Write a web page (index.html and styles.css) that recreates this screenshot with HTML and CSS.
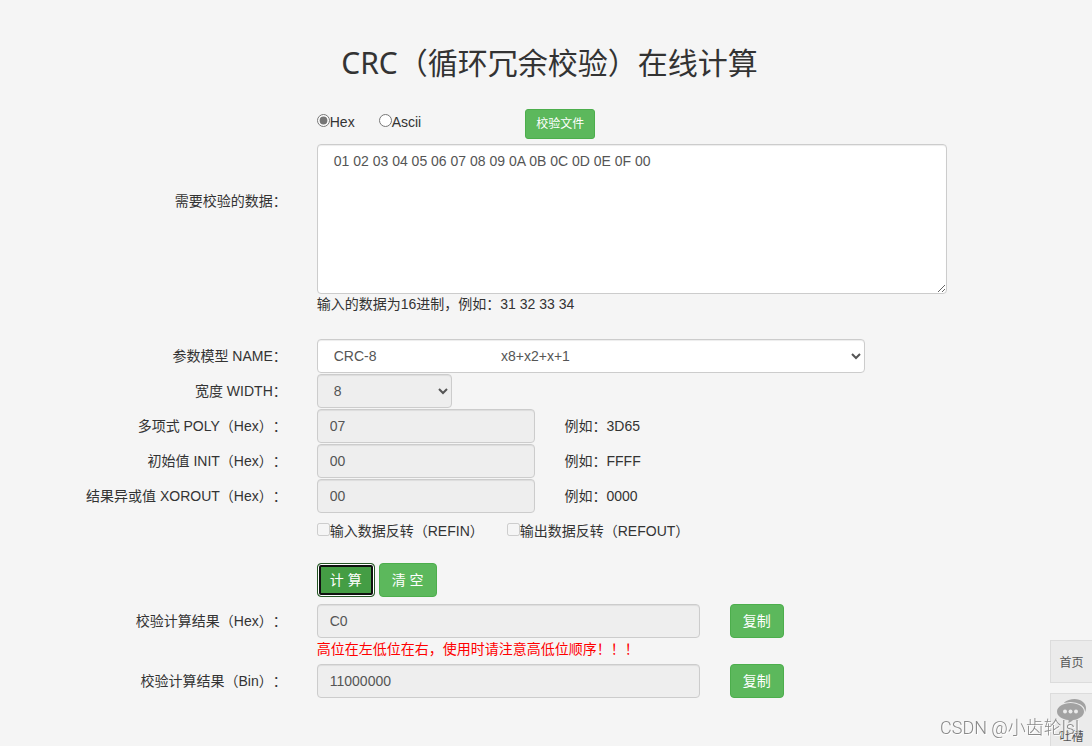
FILE: index.html
```html
<!DOCTYPE html>
<html lang="zh-CN">
<head>
<meta charset="utf-8">
<title>CRC（循环冗余校验）在线计算</title>
<link rel="stylesheet" href="styles.css">
</head>
<body>
<main class="page">
  <h1 class="title">CRC（循环冗余校验）在线计算</h1>
  <form class="form">
    <div class="row">
      <div class="c9 modes">
        <label class="check"><input type="radio" name="mode" checked>Hex</label>
        <label class="check"><input type="radio" name="mode">Ascii</label>
        <button type="button" class="btn btn-sm">校验文件</button>
      </div>
    </div>
    <div class="row">
      <label class="label label-data" for="data">需要校验的数据：</label>
      <div class="c8">
        <textarea id="data" class="control area" spellcheck="false">01 02 03 04 05 06 07 08 09 0A 0B 0C 0D 0E 0F 00</textarea>
        <p class="hint">输入的数据为16进制，例如：31 32 33 34</p>
      </div>
    </div>
    <div class="fields">
      <div class="row">
        <label class="label" for="name">参数模型 NAME：</label>
        <div class="c7"><select id="name" class="control"><option>CRC-8&nbsp;&nbsp;&nbsp;&nbsp;&nbsp;&nbsp;&nbsp;&nbsp;&nbsp;&nbsp;&nbsp;&nbsp;&nbsp;&nbsp;&nbsp;&nbsp;&nbsp;&nbsp;&nbsp;&nbsp;&nbsp;&nbsp;&nbsp;&nbsp;&nbsp;&nbsp;&nbsp;&nbsp;&nbsp;&nbsp;&nbsp;&nbsp;x8+x2+x+1</option></select></div>
      </div>
      <div class="row">
        <label class="label" for="width">宽度 WIDTH：</label>
        <div class="c2"><select id="width" class="control" disabled><option>8</option></select></div>
      </div>
      <div class="row">
        <label class="label" for="poly">多项式 POLY（Hex）：</label>
        <div class="c3"><input id="poly" class="control" type="text" value="07" readonly></div>
        <span class="c3 example">例如：3D65</span>
      </div>
      <div class="row">
        <label class="label" for="init">初始值 INIT（Hex）：</label>
        <div class="c3"><input id="init" class="control" type="text" value="00" readonly></div>
        <span class="c3 example">例如：FFFF</span>
      </div>
      <div class="row">
        <label class="label" for="xorout">结果异或值 XOROUT（Hex）：</label>
        <div class="c3"><input id="xorout" class="control" type="text" value="00" readonly></div>
        <span class="c3 example">例如：0000</span>
      </div>
    </div>
    <div class="row">
      <div class="c9 flags">
        <label class="check"><input type="checkbox" disabled>输入数据反转（REFIN）</label>
        <label class="check"><input type="checkbox" disabled>输出数据反转（REFOUT）</label>
      </div>
    </div>
    <div class="row">
      <div class="c9 actions">
        <button type="button" class="btn btn-active">计 算</button>
        <button type="button" class="btn">清 空</button>
      </div>
    </div>
    <div class="row">
      <label class="label" for="hex">校验计算结果（Hex）：</label>
      <div class="c5">
        <input id="hex" class="control" type="text" value="C0" readonly>
        <p class="hint warning">高位在左低位在右，使用时请注意高低位顺序！！！</p>
      </div>
      <div class="c2"><button type="button" class="btn">复制</button></div>
    </div>
    <div class="row result">
      <label class="label" for="bin">校验计算结果（Bin）：</label>
      <div class="c5"><input id="bin" class="control" type="text" value="11000000" readonly></div>
      <div class="c2"><button type="button" class="btn">复制</button></div>
    </div>
  </form>
</main>
<nav class="side">
  <a class="side-item" href="#">首页</a>
  <a class="side-item side-chat" href="#">
    <svg width="30" height="24" viewBox="0 0 30 24" aria-hidden="true">
      <path d="M7 3.500C10 1.200 13.500 0 17.500 0 24 0 29 4 29 9c0 2.500-1 4.500-2.500 6L22 12Z" fill="#a2a2a2"/>
      <path d="M13.500 4C21 4 27 7.700 27 12.500S21.500 20.500 16 21c-1.200 1.400-3 2.500-5 3 .700-1 .900-2 .500-3C5 20.500 0 17 0 12.500S6 4 13.500 4Z" fill="#a2a2a2" stroke="#ebebeb" stroke-width="2" paint-order="stroke"/>
      <circle cx="8" cy="12.500" r="2" fill="#ebebeb"/><circle cx="13.500" cy="12.500" r="2" fill="#ebebeb"/><circle cx="19" cy="12.500" r="2" fill="#ebebeb"/>
    </svg>
    <span>吐槽</span>
  </a>
</nav>
<div class="watermark">CSDN @小齿轮lsl</div>
</body>
</html>
```
FILE: styles.css
```css
* { box-sizing: border-box; }
html { height: 100%; overflow: hidden; }
body {
  margin: 0;
  background: #f5f5f5;
  color: #333;
  font: 14px/20px "Liberation Sans", "Noto Sans CJK SC", sans-serif;
  text-spacing-trim: space-all;
}
.page { padding: 46px 47px 20px 54px; }
.title {
  margin: 0 0 30px;
  font: 400 30px/33px "Noto Sans", "Noto Sans CJK SC", sans-serif;
  text-align: center;
}
.row { display: grid; grid-template-columns: repeat(12, 1fr); }
.row > * { padding: 0 15px; min-width: 0; }
.row > .label { grid-column: 1 / span 3; padding-top: 7px; text-align: right; line-height: 20px; }
.row > .label-data { padding-top: 47px; }
.c2 { grid-column-end: span 2; }
.c3 { grid-column-end: span 3; }
.c5 { grid-column-end: span 5; }
.c7 { grid-column-end: span 7; }
.c8 { grid-column-end: span 8; }
.c9 { grid-column: 4 / span 9; }
.check { display: flex; align-items: flex-start; white-space: nowrap; }
.check input { width: 13px; height: 13px; margin: 2px 0 0; accent-color: #767676; }
.modes { display: flex; height: 35px; }
.modes .check { margin: 3px 24px 0 0; }
.modes .btn { margin-left: 80px; }
.control {
  display: block;
  width: 100%;
  height: 34px;
  padding: 6px 12px;
  border: 1px solid #ccc;
  border-radius: 4px;
  background: #fff;
  box-shadow: inset 0 1px 1px rgba(0, 0, 0, .075);
  color: #555;
  font: inherit;
  outline: 0;
}
.control:read-only:not(select), .control:disabled { background: #eee; opacity: 1; }
.area { height: 150px; padding: 6px 16px; resize: vertical; }
.hint { margin: 0; line-height: 20px; white-space: nowrap; }
.warning { margin-top: 1px; color: #f00; }
.fields { display: grid; gap: 1px; margin-top: 25px; }
.example { line-height: 34px; }
.flags { display: flex; gap: 23px; margin-top: 8px; }
.actions { display: flex; gap: 4px; margin: 22px 0 7px; }
.result { margin-top: 5px; }
.btn {
  height: 34px;
  padding: 0 12px;
  border: 1px solid #4cae4c;
  border-radius: 4px;
  background: #5cb85c;
  color: #fff;
  font: inherit;
  white-space: nowrap;
}
.btn-sm { height: 30px; padding: 0 10px; border-radius: 3px; font-size: 12px; }
.btn-active {
  border-color: #255625;
  background: #449d44;
  box-shadow: inset 0 0 0 1px #fff, inset 0 0 0 3px #101010;
}
.side { position: fixed; top: 640px; right: 0; width: 42px; display: grid; gap: 10px; }
.side-item {
  display: block;
  height: 43px;
  border: 1px solid #dcdcdc;
  border-right: 0;
  background: #ebebeb;
  color: #555;
  font-size: 12px;
  line-height: 44px;
  text-align: center;
  text-decoration: none;
}
.side-chat { height: 60px; padding-top: 5px; line-height: 18px; }
.side-chat svg { display: block; margin: 0 auto 5px 6px; }
.watermark {
  position: fixed;
  right: 13px;
  bottom: 6px;
  color: #8a8a8a;
  font: 300 18px/24px Roboto, "Noto Sans CJK SC", sans-serif;
  text-shadow: 1px 1px 0 #fff;
  pointer-events: none;
}
```
